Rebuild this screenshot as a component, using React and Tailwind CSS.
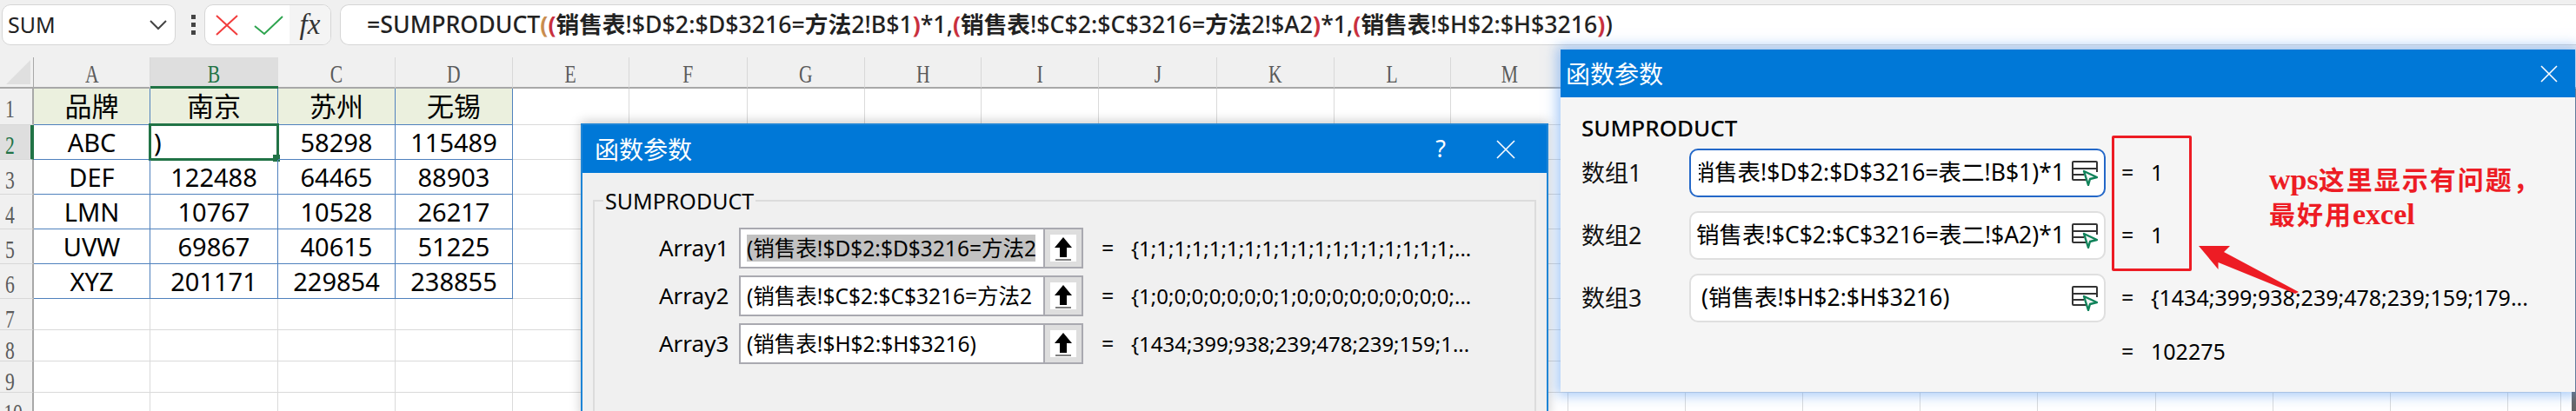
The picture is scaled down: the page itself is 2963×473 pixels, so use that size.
// App.jsx
// Spreadsheet formula bar and grid with two floating "函数参数" dialogs on top.

const SANS = "font-['Noto_Sans','Noto_Sans_CJK_SC',sans-serif]";

const COLUMNS = ["A", "B", "C", "D", "E", "F", "G", "H", "I", "J", "K", "L", "M", "N", "O", "P", "Q", "R", "S", "T", "U"];

const TABLE = [
  ["品牌", "南京", "苏州", "无锡"],
  ["ABC", ")", "58298", "115489"],
  ["DEF", "122488", "64465", "88903"],
  ["LMN", "10767", "10528", "26217"],
  ["UVW", "69867", "40615", "51225"],
  ["XYZ", "201171", "229854", "238855"],
];

const ROW_NUMBERS = [1, 2, 3, 4, 5, 6, 7, 8, 9, 10];

function Paren({ children }) {
  return <span className="font-bold text-[#c9303e]">{children}</span>;
}

function Bold({ children }) {
  return <span className="font-bold">{children}</span>;
}

function FormulaBar() {
  return (
    <div className="flex h-[66px] items-start gap-[10px] bg-[#f0f0f0] pl-[2px] pt-[5px]">
      {/* Name box */}
      <div className="flex h-[47px] w-[200px] shrink-0 items-center justify-between rounded-[10px] border border-[#d6d6d6] bg-white pl-[6px] pr-[8px] text-[25px] text-[#222]">
        <span>SUM</span>
        <svg width="22" height="14" viewBox="0 0 22 14" fill="none" stroke="#444" strokeWidth="2">
          <path d="M2 2l9 9 9-9" />
        </svg>
      </div>

      {/* Grip */}
      <div className="mx-[8px] flex h-[47px] shrink-0 flex-col items-center justify-center gap-[4px]">
        <span className="h-[5px] w-[5px] bg-[#444]" />
        <span className="h-[5px] w-[5px] bg-[#444]" />
        <span className="h-[5px] w-[5px] bg-[#444]" />
      </div>

      {/* Cancel, confirm, insert function */}
      <div className="-ml-[8px] flex h-[47px] w-[146px] shrink-0 items-center overflow-hidden rounded-[10px] border border-[#d6d6d6] bg-white">
        <svg className="ml-[12px] shrink-0" width="26" height="26" viewBox="0 0 26 26" fill="none" stroke="#f23c3c" strokeWidth="2">
          <path d="M1 2l24 22M25 2L1 24" />
        </svg>
        <svg className="ml-[18px] shrink-0" width="34" height="24" viewBox="0 0 34 24" fill="none" stroke="#2ea44f" strokeWidth="2">
          <path d="M1 13l11 9L33 2" />
        </svg>
        <div className="ml-[7px] flex h-full flex-1 items-center justify-center bg-[#f4f4f4] font-['Liberation_Serif',serif] text-[33px] italic text-[#333]">
          fx
        </div>
      </div>

      {/* Formula */}
      <div className="flex h-[47px] flex-1 items-center rounded-l-[10px] border border-r-0 border-[#d6d6d6] bg-white pl-[30px] text-[26.7px] font-medium whitespace-nowrap text-[#222]">
        <span>=SUMPRODUCT</span>
        <span className="font-bold text-[#c98d4e]">(</span>
        <Paren>(</Paren>
        <Bold>销售表</Bold>!$D$2:$D$3216=<Bold>方法</Bold>2!B$1<Paren>)</Paren>*1,<Paren>(</Paren>
        <Bold>销售表</Bold>!$C$2:$C$3216=<Bold>方法</Bold>2!$A2<Paren>)</Paren>*1,<Paren>(</Paren>
        <Bold>销售表</Bold>!$H$2:$H$3216<Paren>)</Paren>)
      </div>
    </div>
  );
}

function HeaderLetter({ children, active }) {
  return (
    <span
      className={`inline-block scale-x-[0.72] font-['Liberation_Serif',serif] text-[30px] leading-none ${
        active ? "text-[#217346]" : "text-[#5a5a5a]"
      }`}
    >
      {children}
    </span>
  );
}

function Sheet() {
  return (
    <div className="grid grid-cols-[39px_134px_147px_135px_135px_134px_136px_135px_134px_135px_136px_135px_134px_135px_135px_135px_135px_135px_136px_135px_135px_135px_61px_17px] grid-rows-[36px_42px_40px_40px_40px_40px_40px_36px_36px_36px_40px]">
      {/* Column headers */}
      <div className="relative overflow-hidden border-r border-b-2 border-r-[#a8a8a8] border-b-[#a8a8a8] bg-[#f0f0f0]">
        <div className="absolute right-[3px] bottom-[3px] h-0 w-0 border-t-[28px] border-r-[28px] border-t-transparent border-r-[#dfdfdf]" />
      </div>
      {COLUMNS.map((c) => (
        <div
          key={c}
          className={`flex items-center justify-center pt-[4px] ${
            c === "B"
              ? "border-b-[3px] border-b-[#217346] bg-[#dedede]"
              : "border-r border-b-2 border-r-[#d8d8d8] border-b-[#a8a8a8] bg-[#f0f0f0]"
          }`}
        >
          <HeaderLetter active={c === "B"}>{c}</HeaderLetter>
        </div>
      ))}
      <div className="border-b-2 border-b-[#a8a8a8] bg-[#f0f0f0]" />
      <div className="border-b-2 border-b-[#a8a8a8] bg-[#f0f0f0]" />

      {/* Rows */}
      {ROW_NUMBERS.map((n, r) => (
        <Row key={n} n={n} cells={TABLE[r]} />
      ))}
    </div>
  );
}

function Row({ n, cells }) {
  const selectedRow = n === 2;
  return (
    <>
      <div
        className={`border-b border-b-[#d8d8d8] pt-[8px] ${
          selectedRow ? "border-r-[4px] border-r-[#217346] bg-[#dedede]" : "border-r-2 border-r-[#a8a8a8] bg-[#f0f0f0]"
        }`}
      >
        <div className="w-[22px] text-center whitespace-nowrap">
          <HeaderLetter active={selectedRow}>{n}</HeaderLetter>
        </div>
      </div>
      {COLUMNS.map((c, i) => {
        const inTable = cells && i < 4;
        const selected = selectedRow && c === "B";
        let cls = "border-r border-b border-r-[#dadada] border-b-[#dadada] text-[29px]";
        if (inTable) cls = "border-r border-b border-r-[#4f81bd] border-b-[#4f81bd] text-[29px]";
        if (inTable && n === 1) cls = "border-r border-b border-r-[#4f81bd] border-b-[#4f81bd] bg-[#ebf0de] text-[31px]";
        return (
          <div
            key={c}
            className={`relative flex items-center overflow-visible leading-none text-black ${cls} ${
              selected ? "justify-start pl-[4px]" : "justify-center"
            }`}
          >
            {inTable ? cells[i] : null}
            {selected && (
              <div className="absolute -top-[2px] -right-[2px] -bottom-[2px] -left-[2px] border-[3px] border-[#217346]">
                <span className="absolute -right-[4px] -bottom-[4px] h-[8px] w-[8px] bg-[#217346]" />
              </div>
            )}
          </div>
        );
      })}
      <div className="border-r border-b border-[#dadada]" />
      <div className="border-r-[5px] border-r-[#666] bg-white" />
    </>
  );
}

function UpButton() {
  return (
    <div className="flex h-full w-[44px] shrink-0 items-center justify-center border-l-2 border-l-[#a9a9b0] bg-[#dedede]">
      <div className="flex h-[31px] w-[30px] items-center justify-center bg-white">
        <svg width="22" height="28" viewBox="0 0 22 28">
          <path d="M11 1L21 13h-6v11H7V13H1z" fill="#000" />
          <path d="M2 27h18" stroke="#000" strokeWidth="1" />
        </svg>
      </div>
    </div>
  );
}

const ARRAY_ROWS = [
  { label: "Array1", text: "(销售表!$D$2:$D$3216=方法2", value: "{1;1;1;1;1;1;1;1;1;1;1;1;1;1;1;1;1;1;...", selected: true },
  { label: "Array2", text: "(销售表!$C$2:$C$3216=方法2", value: "{1;0;0;0;0;0;0;0;1;0;0;0;0;0;0;0;0;0;..." },
  { label: "Array3", text: "(销售表!$H$2:$H$3216)", value: "{1434;399;938;239;478;239;159;1..." },
];

function ExcelDialog() {
  return (
    <div className="absolute top-[142px] left-[668px] h-[340px] w-[1113px] border-x-2 border-t-2 border-[#1e85d6] bg-[#f0f0f0] shadow-[0_-2px_12px_rgba(0,0,0,0.22)]">
      <div className="flex h-[55px] items-center bg-[#0078d7] pr-[36px] pl-[14px] text-white">
        <span className="flex-1 text-[28px]">函数参数</span>
        <span className="mr-[58px] text-[27px]">?</span>
        <svg width="22" height="22" viewBox="0 0 22 22" stroke="#fff" strokeWidth="1.6">
          <path d="M1 1l20 20M21 1L1 21" />
        </svg>
      </div>
      <fieldset className="mx-[12px] mt-[17px] h-[300px] border-2 border-[#dcdcdc]">
        <legend className="ml-[10px] px-[2px] text-[25px] leading-[30px] text-black">SUMPRODUCT</legend>
        <div className="mt-[16px] flex flex-col gap-[8px] pl-[74px]">
          {ARRAY_ROWS.map((row) => (
            <div key={row.label} className="flex h-[47px] items-center">
              <span className="w-[92px] shrink-0 text-[26px] text-black">{row.label}</span>
              <div className="flex h-full w-[396px] shrink-0 items-center overflow-hidden border-2 border-[#a9a9b0] bg-white pl-[7px]">
                <div className="min-w-0 flex-1 overflow-hidden">
                  <span
                    className={`block text-[24.5px] leading-[31px] whitespace-nowrap text-black ${
                      row.selected ? "bg-[#c2c2c2]" : ""
                    }`}
                  >
                    {row.text}
                  </span>
                </div>
                <span className="w-[9px] shrink-0" />
                <UpButton />
              </div>
              <span className="ml-[21px] w-[34px] shrink-0 text-[25px] text-black">=</span>
              <span className="text-[24px] whitespace-nowrap text-black">{row.value}</span>
            </div>
          ))}
        </div>
      </fieldset>
    </div>
  );
}

function RangeIcon() {
  return (
    <svg className="shrink-0" width="30" height="29" viewBox="0 0 30 29" fill="none">
      <path d="M16 22H2a1 1 0 0 1-1-1V2a1 1 0 0 1 1-1h26a1 1 0 0 1 1 1v11M1 9h28M1 16h13" stroke="#333" strokeWidth="2" />
      <path d="M14 12l15 7-8 2-2 7z" fill="#f5f5f5" stroke="#10835a" strokeWidth="2.4" strokeLinejoin="round" />
    </svg>
  );
}

const WPS_ROWS = [
  { label: "数组1", text: "(销售表!$D$2:$D$3216=表二!B$1)*1", value: "1", focused: true },
  { label: "数组2", text: "销售表!$C$2:$C$3216=表二!$A2)*1", value: "1" },
  { label: "数组3", text: "(销售表!$H$2:$H$3216)", value: "{1434;399;938;239;478;239;159;179...", start: true },
];

function WpsDialog() {
  return (
    <div className="absolute top-[57px] left-[1795px] h-[394px] w-[1167px] bg-[#f5f5f5] shadow-[0_0_14px_4px_rgba(90,155,240,0.55)]">
      <div className="flex h-[55px] items-center justify-between bg-[#0078d7] pr-[20px] pl-[6px] text-white">
        <span className="text-[28px]">函数参数</span>
        <svg width="20" height="20" viewBox="0 0 20 20" stroke="#fff" strokeWidth="1.6">
          <path d="M1 1l18 18M19 1L1 19" />
        </svg>
      </div>
      <div className="pl-[24px]">
        <div className="mt-[18px] text-[26px] leading-[34px] font-medium text-black">SUMPRODUCT</div>
        <div className="mt-[7px] flex flex-col gap-[16px]">
          {WPS_ROWS.map((row) => (
            <div key={row.label} className="flex h-[56px] items-center">
              <span className="w-[124px] shrink-0 text-[27px] text-[#111]">{row.label}</span>
              <div
                className={`flex h-full w-[479px] shrink-0 items-center rounded-[10px] border-2 bg-white pr-[7px] pl-[5px] ${
                  row.focused ? "border-[#2468c8]" : "border-[#dfdfdf]"
                }`}
              >
                <div
                  className={`flex min-w-0 flex-1 overflow-hidden ${
                    row.start ? "justify-start pl-[7px]" : "justify-end pr-[8px]"
                  } ${row.focused ? "ml-[4px]" : ""}`}
                >
                  <span className="shrink-0 text-[26.5px] whitespace-nowrap text-black">{row.text}</span>
                </div>
                <RangeIcon />
              </div>
              <span className="ml-[18px] w-[34px] shrink-0 text-[25px] text-black">=</span>
              <span className="text-[25px] whitespace-nowrap text-black">{row.value}</span>
            </div>
          ))}
          <div className="flex h-[36px] items-center pl-[603px]">
            <span className="ml-[18px] w-[34px] shrink-0 text-[25px] text-black">=</span>
            <span className="text-[25px] text-black">102275</span>
          </div>
        </div>
      </div>

      {/* Red annotation laid over the dialog */}
      <div className="absolute top-[99px] left-[634px] h-[156px] w-[92px] rounded-[2px] border-[3px] border-[#ed1c24]" />
      <svg className="absolute top-[226px] left-[734px]" width="116" height="56" viewBox="0 0 116 56">
        <path d="M0 0L36 0L29 7L115 53L111 55L22.5 19L22.5 27z" fill="#ed1c24" />
      </svg>
      <div className="absolute top-[130px] left-[815px] font-['Liberation_Serif','Noto_Sans_CJK_SC',serif] text-[30px] leading-[39px] font-bold tracking-[2px] whitespace-nowrap text-[#ed1c24]">
        <div>
          <span className="text-[34px] tracking-normal">wps</span>这里显示有问题，
        </div>
        <div>
          最好用<span className="text-[34px] tracking-normal">excel</span>
        </div>
      </div>
    </div>
  );
}

export default function App() {
  return (
    <div className={`relative h-[473px] w-[2963px] overflow-hidden bg-white ${SANS}`}>
      <FormulaBar />
      <Sheet />
      <ExcelDialog />
      <WpsDialog />
    </div>
  );
}
